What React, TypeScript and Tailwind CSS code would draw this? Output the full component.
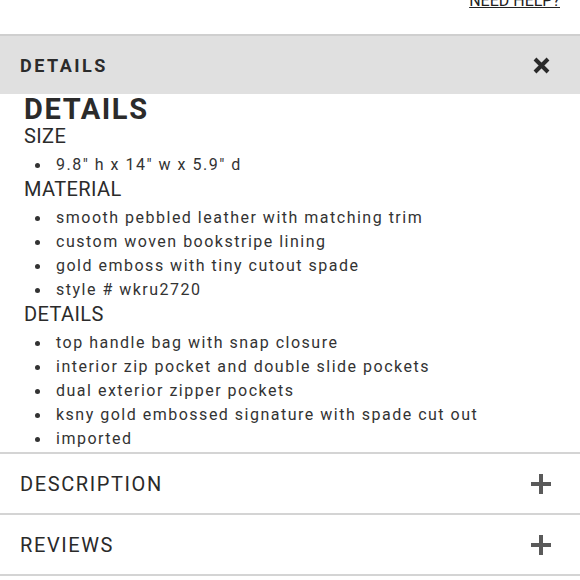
const sections: { title: string; items: string[] }[] = [
  { title: "SIZE", items: ['9.8" h x 14" w x 5.9" d'] },
  {
    title: "MATERIAL",
    items: [
      "smooth pebbled leather with matching trim",
      "custom woven bookstripe lining",
      "gold emboss with tiny cutout spade",
      "style # wkru2720",
    ],
  },
  {
    title: "DETAILS",
    items: [
      "top handle bag with snap closure",
      "interior zip pocket and double slide pockets",
      "dual exterior zipper pockets",
      "ksny gold embossed signature with spade cut out",
      "imported",
    ],
  },
];

function PlusIcon() {
  return (
    <svg width="20" height="20" viewBox="0 0 20 20" className="fill-[#5a5a5a]">
      <rect x="8" y="0" width="4" height="20" />
      <rect x="0" y="8" width="20" height="4" />
    </svg>
  );
}

function CloseIcon() {
  return (
    <svg width="17" height="17" viewBox="0 0 17 17" className="stroke-[#2a2a2a]" strokeWidth="4">
      <path d="M2 2 L15 15 M15 2 L2 15" />
    </svg>
  );
}

function CollapsedRow({ title }: { title: string }) {
  return (
    <div className="flex h-[61px] items-center justify-between border-b-2 border-[#d4d4d4] pl-5 pr-[29px]">
      <span className="text-[20px] tracking-[1.6px] text-[#2a2a2a]">{title}</span>
      <PlusIcon />
    </div>
  );
}

export default function App() {
  return (
    <div className="h-[580px] w-[580px] overflow-hidden bg-white font-['Roboto',sans-serif] text-[#333]">
      <div className="flex h-[34px] justify-end pr-5">
        <a className="-mt-[9px] text-[16px] leading-5 text-[#222] underline">NEED HELP?</a>
      </div>
      <div className="flex h-[60px] items-center justify-between border-t-2 border-[#cfcfcf] bg-[#e0e0e0] pl-5 pr-[30px]">
        <span className="text-[18px] font-bold tracking-[2.5px] text-[#2b2b2b]">DETAILS</span>
        <CloseIcon />
      </div>
      <div className="border-b-2 border-[#d4d4d4] pb-[1px] pl-6">
        <h2 className="text-[29px] font-bold leading-[30px] tracking-[1.6px] text-[#2b2b2b]">DETAILS</h2>
        {sections.map((s) => (
          <div key={s.title}>
            <h4 className="text-[20px] leading-[25px] tracking-[0.4px] text-[#2b2b2b]">{s.title}</h4>
            <ul className="mt-1">
              {s.items.map((it) => (
                <li key={it} className="flex items-center text-[16px] leading-6 tracking-[1.5px]">
                  <span className="w-[32px] pl-[11px]">
                    <span className="block h-[5px] w-[5px] rounded-full bg-[#333]" />
                  </span>
                  <span>{it}</span>
                </li>
              ))}
            </ul>
          </div>
        ))}
      </div>
      <CollapsedRow title="DESCRIPTION" />
      <CollapsedRow title="REVIEWS" />
    </div>
  );
}
